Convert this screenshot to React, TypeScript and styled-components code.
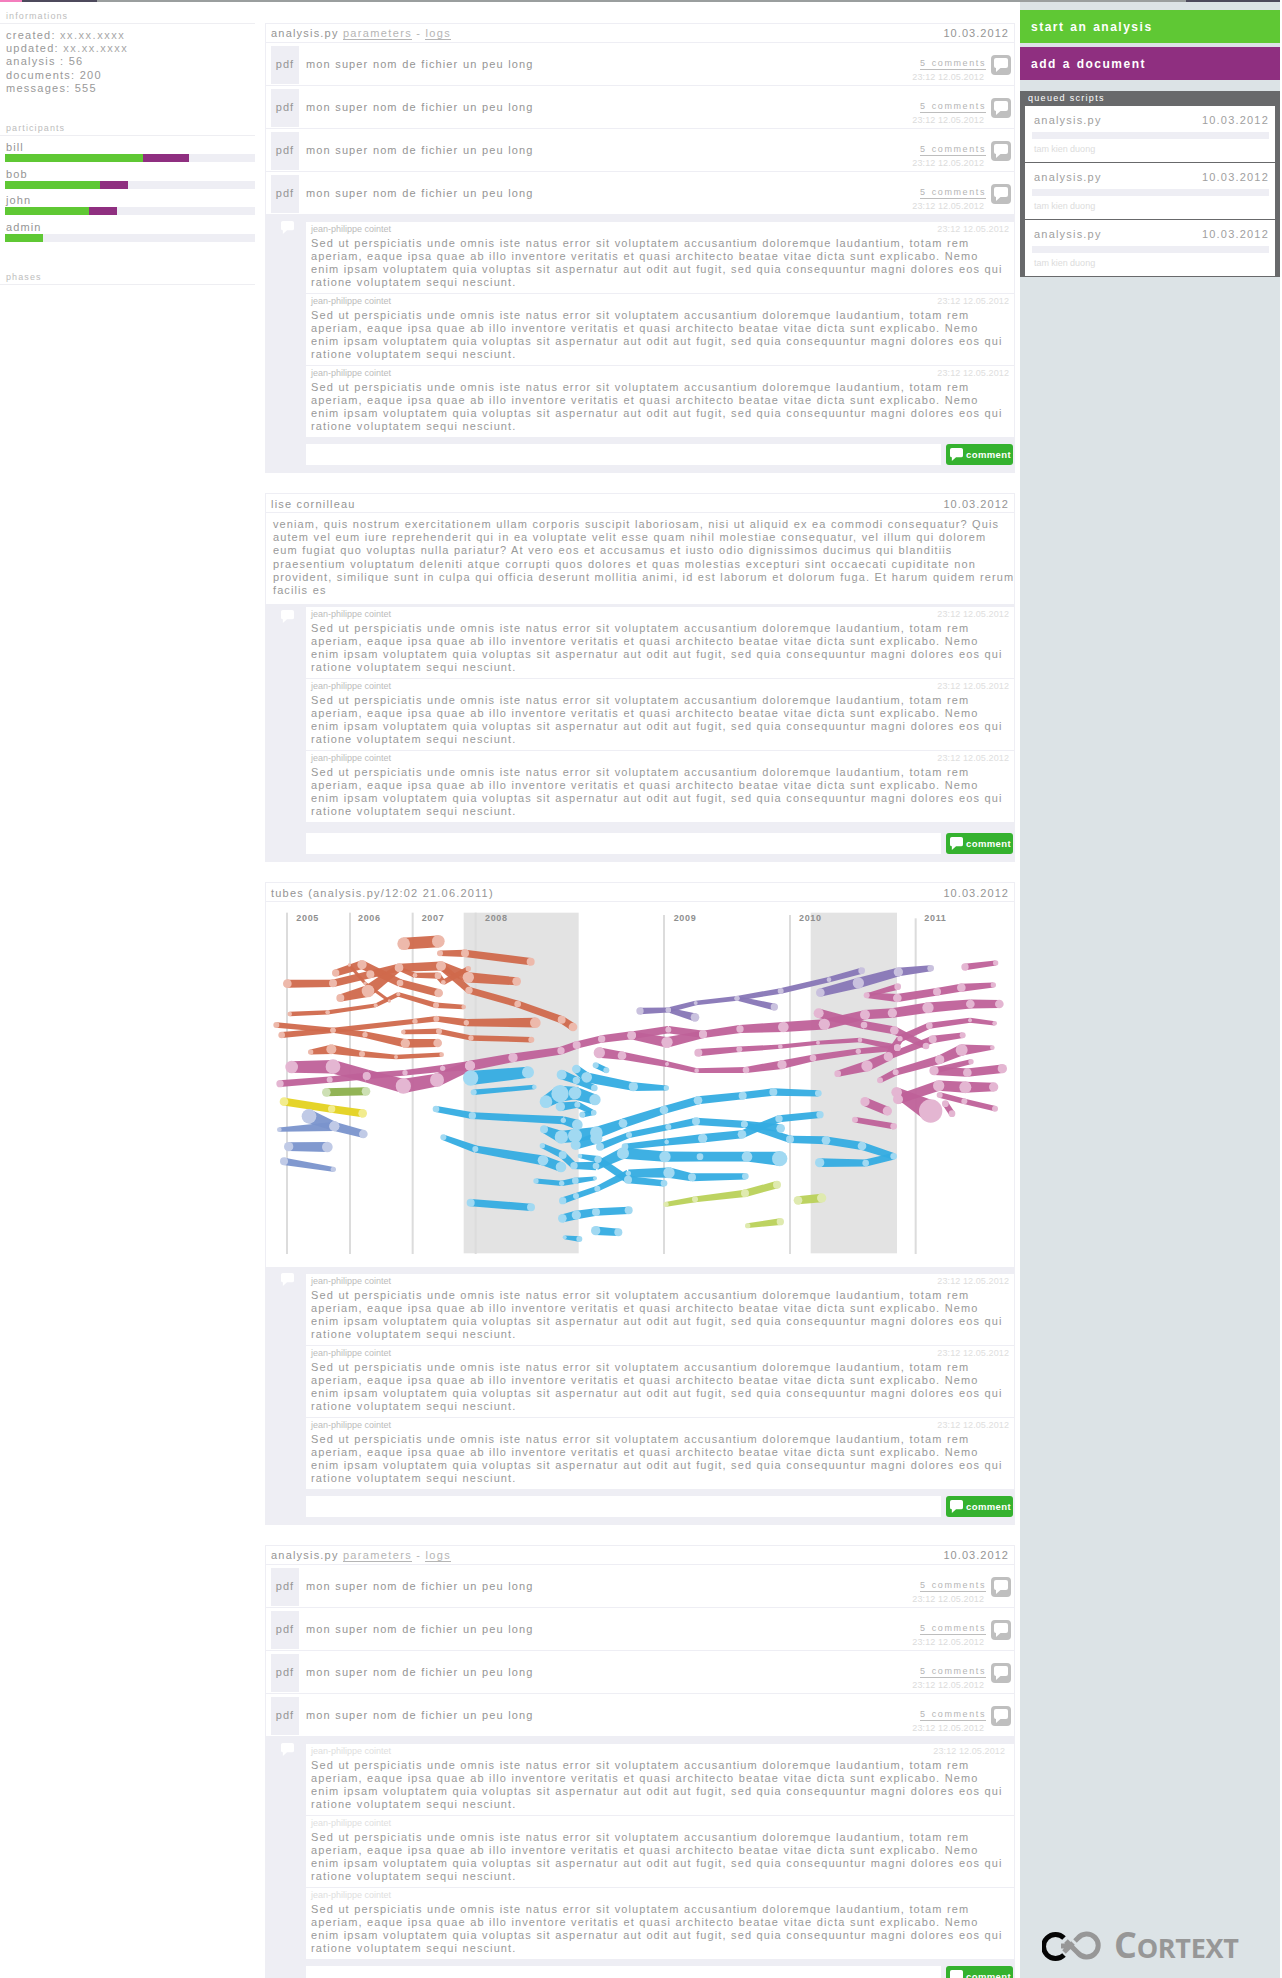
import React from "react";
import styled, { createGlobalStyle } from "styled-components";

const Global = createGlobalStyle`
  html, body { margin: 0; padding: 0; background: #fff; }
  body { font-family: "Liberation Sans", Arial, sans-serif; color: #959595; font-size: 11px; }
`;

const Page = styled.div`
  width: 1282px; height: 1978px; overflow: hidden; display: flex; flex-direction: column;
`;
const Strip = styled.div`display: flex; height: 2px; flex: none;`;
const StripPart = styled.div<{ $w: number; $c: string }>`
  width: ${p => p.$w}px; background: ${p => p.$c};
`;
const Columns = styled.div`display: flex; flex: 1; min-height: 0;`;

const Left = styled.aside`width: 255px; flex: none; margin-right: 10px;`;
const SideHead = styled.div<{ $top: number }>`
  margin-top: ${p => p.$top}px; padding: 0 0 0 6px; height: 13px; line-height: 13px; font-size: 9px; letter-spacing: 1.1px;
  color: #bdbdbd; border-bottom: 1px solid #eeeef2;
`;
const InfoList = styled.div`padding: 5px 0 0 6px; line-height: 13.2px; letter-spacing: 1.25px; color: #999;`;
const Xs = styled.span`color: #a8a8a8; letter-spacing: 1.5px;`;
const People = styled.div`padding: 5px 0 0 5px;`;
const Person = styled.div`height: 26.67px;`;
const PersonName = styled.div`height: 13px; line-height: 13px; padding-left: 1px; letter-spacing: 1.1px;`;
const Track = styled.div`display: flex; height: 8px; background: #eeeef4;`;
const Fill = styled.div<{ $c: string }>`background: ${p => p.$c};`;

const Main = styled.main`width: 750px; flex: none; padding-top: 21px; margin-right: 5px;`;
const Card = styled.section`margin-bottom: 20px; border-left: 1px solid #eeeef4; border-right: 1px solid #eeeef4;`;
const CardHead = styled.header<{ $raised?: boolean }>`
  display: flex; align-items: center; justify-content: space-between; box-sizing: content-box;
  padding: ${p => (p.$raised ? 0 : 1)}px 5px 0 5px; height: ${p => (p.$raised ? 18 : 17)}px;
  border-top: 1px solid #eeeef4; border-bottom: 1px solid #eeeef4;
  letter-spacing: 1.2px;
`;
const HeadDate = styled.span`letter-spacing: 1.05px;`;
const HeadLink = styled.span`color: #b5b5b5; border-bottom: 1px solid #b5b5b5; line-height: 12px; letter-spacing: 1.35px;`;
const Sep = styled.span`color: #b5b5b5;`;
const FileRow = styled.div`
  display: flex; padding: 3px 3px 0 5px; box-sizing: content-box; height: 39px;
  border-bottom: 1px solid #eeeef4; &:last-of-type { border-bottom: 0; height: 40px; }
`;
const PdfTag = styled.div`
  width: 28px; height: 38px; padding-bottom: 2px; box-sizing: border-box; background: #eeeef4; display: flex; align-items: center; justify-content: center;
  letter-spacing: 1px;
`;
const FileName = styled.div`flex: 1; padding: 0 0 0 7px; line-height: 36px; letter-spacing: 1.1px; word-spacing: .45px;`;
const FileMeta = styled.div`display: flex; flex-direction: column; align-items: flex-end; padding-top: 12px;`;
const CommentsLink = styled.span`
  font-size: 9px; letter-spacing: 1.6px; word-spacing: 1px; line-height: 11px; color: #b5b5b5; border-bottom: 1px solid #bdbdbd; margin-right: 1px;
`;
const SmallDate = styled.span`
  font-size: 9px; line-height: 12px; letter-spacing: .1px; color: #dcdcdc; margin: 1px 3px 0 0;
`;
const IconBox = styled.div`
  width: 20px; height: 20px; margin: 9px 0 0 4px; border-radius: 4px; background: #bfbfbf; display: flex;
  align-items: center; justify-content: center;
`;
const PostText = styled.div`
  padding: 5px 0 7px 7px; line-height: 13.2px; letter-spacing: 1.1px; word-spacing: .35px; color: #999;
`;
const PostLine = styled.div`white-space: nowrap;`;
const ChartBox = styled.div`height: 365px;`;
const Discussion = styled.div<{ $tight?: boolean }>`
  position: relative; background: #eeeef4; height: 258px; box-sizing: border-box; padding: ${p => (p.$tight ? 3 : 7)}px 0 8px 40px;
  display: flex; flex-direction: column;
`;
const DiscussionIcon = styled.div`position: absolute; left: 15px; top: 6px; line-height: 0;`;
const Comment = styled.article`
  flex: none; background: #fff; border-bottom: 1px solid #eeeef4; padding: 2px 5px 0 5px; box-sizing: content-box;
  height: 69px;
`;
const CommentHead = styled.div`display: flex; justify-content: space-between; height: 12px; line-height: 11px; font-size: 9px;`;
const Author = styled.span<{ $faint?: boolean }>`color: ${p => (p.$faint ? "#dedede" : "#bbbbbb")};`;
const CommentDate = styled.span<{ $faint?: boolean }>`
  letter-spacing: .1px; color: #dedede; margin-right: ${p => (p.$faint ? 4 : 0)}px;
`;
const CommentText = styled.p`
  margin: 1px 0 0; line-height: 13px; letter-spacing: 1.1px; word-spacing: .35px; color: #999;
`;
const CommentForm = styled.div`display: flex; gap: 5px; margin-top: auto; padding-right: 1px;`;
const CommentInput = styled.div`flex: 1; height: 21px; background: #fff;`;
const CommentButton = styled.div`
  width: 67px; height: 21px; border-radius: 3px; background: #35b22f; color: #fff; font-weight: bold; font-size: 9.5px;
  display: flex; align-items: center; justify-content: flex-start; gap: 3px; padding: 0 0 1px 4px; box-sizing: border-box;
  letter-spacing: .4px;
`;

const Right = styled.aside`
  width: 260px; flex: none; background: #dce3e6; display: flex; flex-direction: column; padding-top: 8px;
`;
const ActionButton = styled.div<{ $c: string; $lh: number }>`
  height: 33px; line-height: ${p => p.$lh}px; background: ${p => p.$c}; color: #fff; font-weight: bold; font-size: 12px;
  letter-spacing: 1.5px; word-spacing: 1px; padding-left: 11px; margin-bottom: 4px; overflow: hidden;
`;
const Queue = styled.div`margin-top: 7px; background: #68696b; padding: 0 5px 1px;`;
const QueueHead = styled.div`height: 15px; line-height: 14px; font-size: 9px; letter-spacing: 1.3px; color: #fff; padding-left: 3px;`;
const QueueItem = styled.div`
  height: 56px; background: #fff; margin-bottom: 1px; padding: 0 6px 0 7px; &:last-child { margin-bottom: 0; }
`;
const QueueTop = styled.div`
  display: flex; justify-content: space-between; height: 26px; line-height: 29px; letter-spacing: 1.2px; padding: 0 0 0 2px; color: #a0a0a0;
`;
const QueueBar = styled.div`height: 7px; background: #eeeef4;`;
const QueueAuthor = styled.div`font-size: 9px; line-height: 20px; padding-left: 2px; color: #dcdcdc; word-spacing: -.2px;`;
const LogoBox = styled.div`
  margin-top: auto; margin-bottom: 16px; margin-left: 22px; display: flex; align-items: center; gap: 12px; height: 32px;
`;
const LogoWord = styled.span`
  font-family: "Open Sans", sans-serif; font-weight: 700; font-size: 36px; line-height: 32px; color: #979797; letter-spacing: -.3px;
`;
const LogoSmall = styled.span`font-size: 27px;`;

const Bubble = ({ w = 12, c = "#fff" }: { w?: number; c?: string }) => (
  <svg width={w} height={w} viewBox="0 0 14 14">
    <path fill={c} d="M2 0h10a2 2 0 0 1 2 2v6a2 2 0 0 1-2 2H6.5L2 14v-4a2 2 0 0 1-2-2V2a2 2 0 0 1 2-2z" />
  </svg>
);

type Pt = [number, number, number];
type Tube = { k: string; p: Pt[] };
const PAL: Record<string, [string, string]> = {
  o: ["#d0694c", "#edb9ab"], m: ["#bf6199", "#e4b6d2"], b: ["#34ace1", "#a1d9f2"], v: ["#8776b6", "#c9c1de"],
  y: ["#e4d21f", "#f2ec8e"], g: ["#8cb04d", "#cde0b4"], l: ["#b9d158", "#dfeaaf"], s: ["#7a93cc", "#c0cae6"],
};
const B = 1125;
const sh = (p: Pt[]): Pt[] => p.map(([x, y, d]) => [x + B, y, d]);
const TUBES: Tube[] = [
  { k: "o", p: [[416, 191, 38], [520, 184, 38]] },
  { k: "o", p: [[525, 220, 18], [600, 220, 24], [797, 245, 24]] },
  { k: "o", p: [[67, 311, 26], [204, 310, 24], [316, 283, 24], [402, 263, 26], [528, 258, 30], [610, 292, 34], [755, 304, 26]] },
  { k: "o", p: [[212, 279, 22], [291, 254, 28], [405, 309, 20], [521, 339, 26]] },
  { k: "o", p: [[226, 354, 24], [309, 333, 38], [402, 263, 24]] },
  { k: "o", p: [[528, 258, 24], [612, 331, 22], [758, 372, 20], [890, 419, 24], [924, 441, 26]] },
  { k: "o", p: [[253, 255, 10], [300, 310, 10], [373, 363, 10]] },
  { k: "o", p: [[74, 402, 14], [188, 397, 14], [332, 376, 12], [400, 343, 12], [513, 376, 18], [596, 381, 14]] },
  { k: "o", p: [[34, 435, 18], [204, 451, 16], [300, 464, 16], [421, 490, 28], [518, 489, 26]] },
  { k: "o", p: [[50, 465, 20], [204, 451, 16], [450, 424, 16], [514, 416, 18], [604, 428, 16], [811, 428, 32]] },
  { k: "o", p: [[415, 456, 14], [522, 454, 18], [618, 474, 16], [799, 479, 18]] },
  { k: "o", p: [[137, 516, 16], [199, 508, 30], [291, 522, 18], [393, 531, 12], [530, 524, 14]] },
  { k: "o", p: [[400, 265, 14], [450, 286, 14], [519, 287, 20], [535, 307, 14], [610, 266, 16]] },
  { k: "m", p: [[80, 561, 38], [204, 560, 44], [305, 588, 24], [415, 618, 46], [516, 600, 42], [615, 557, 30], [744, 533, 28], [888, 512, 22], [935, 495, 24], [1010, 477, 22], [1100, 466, 26], [B + 85, 449, 18], [B + 189, 463, 24], [B + 300, 447, 22], [B + 430, 441, 32], [B + 553, 433, 34], [B + 675, 404, 30], [B + 757, 399, 28], [B + 864, 383, 34], [B + 991, 372, 26], [B + 1078, 372, 26]] },
  { k: "m", p: [[1100, 466, 26], [B + 81, 487, 34], [B + 189, 463, 24]] },
  { k: "m", p: [[45, 611, 22], [194, 599, 18], [305, 588, 22], [420, 578, 16], [533, 565, 16], [615, 557, 30]] },
  { k: "m", p: [[1003, 518, 34], [1071, 527, 26], [B + 81, 552, 12], [B + 170, 572, 14], [B + 318, 570, 20], [B + 426, 554, 28], [B + 519, 534, 20], [B + 655, 514, 16], [B + 772, 503, 20]] },
  { k: "m", p: sh([[175, 518, 24], [298, 508, 18], [421, 500, 14], [534, 488, 12], [660, 480, 14], [772, 503, 20]]) },
  { k: "m", p: sh([[536, 400, 30], [672, 435, 20], [763, 451, 26], [858, 498, 20]]) },
  { k: "m", p: sh([[593, 581, 20], [681, 558, 34], [745, 530, 28], [780, 476, 16], [868, 437, 20], [990, 421, 12], [1064, 430, 14]]) },
  { k: "m", p: sh([[720, 601, 18], [767, 577, 18], [899, 539, 28], [965, 510, 36], [1057, 503, 14]]) },
  { k: "m", p: sh([[745, 530, 20], [878, 478, 24], [968, 466, 18]]) },
  { k: "m", p: sh([[882, 572, 28], [982, 578, 26], [1087, 566, 28]]) },
  { k: "m", p: sh([[882, 572, 20], [993, 545, 16]]) },
  { k: "m", p: sh([[680, 346, 18], [772, 354, 26], [891, 335, 24], [964, 323, 26], [1060, 315, 16]]) },
  { k: "m", p: sh([[680, 346, 12], [773, 320, 20]]) },
  { k: "m", p: sh([[975, 261, 22], [1067, 249, 16]]) },
  { k: "m", p: sh([[770, 637, 32], [872, 693, 70]]) },
  { k: "m", p: sh([[774, 658, 30], [896, 617, 34], [976, 622, 36], [1061, 621, 28]]) },
  { k: "m", p: sh([[899, 645, 18], [973, 664, 18], [1065, 686, 18]]) },
  { k: "m", p: sh([[675, 665, 28], [742, 693, 28]]) },
  { k: "m", p: sh([[645, 719, 18], [761, 739, 20]]) },
  { k: "m", p: sh([[916, 671, 20], [936, 701, 20]]) },
  { k: "v", p: [[1125, 393, 22], [B + 85, 390, 16], [B + 167, 369, 12], [B + 291, 355, 16], [B + 422, 333, 18], [B + 567, 299, 14], [B + 665, 272, 20]] },
  { k: "v", p: sh([[85, 390, 16], [165, 412, 26]]) },
  { k: "v", p: sh([[291, 355, 14], [403, 381, 22]]) },
  { k: "v", p: sh([[541, 338, 26], [655, 309, 34], [775, 276, 28], [872, 265, 20]]) },
  { k: "b", p: [[617, 594, 46], [789, 577, 36]] },
  { k: "b", p: [[626, 637, 18], [808, 621, 14]] },
  { k: "b", p: [[513, 687, 20], [622, 707, 22], [895, 721, 16], [937, 734, 32]] },
  { k: "b", p: [[535, 772, 18], [631, 807, 18], [834, 841, 32], [888, 861, 32]] },
  { k: "b", p: [[617, 968, 24], [798, 982, 24]] },
  { k: "b", p: [[813, 903, 16], [890, 910, 16], [931, 902, 20], [990, 895, 12]] },
  { k: "b", p: [[893, 962, 22], [933, 948, 18], [997, 926, 18], [1090, 880, 16], [B + 87, 878, 34], [B + 156, 892, 24], [B + 316, 889, 20]] },
  { k: "b", p: [[892, 1015, 26], [934, 1005, 28], [993, 996, 24], [1091, 991, 24]] },
  { k: "b", p: [[992, 1052, 28], [1060, 1057, 24]] },
  { k: "b", p: [[899, 1072, 12], [943, 1077, 18]] },
  { k: "b", p: [[890, 584, 30], [934, 601, 22], [988, 624, 20]] },
  { k: "b", p: [[934, 567, 26], [965, 592, 32], [1105, 620, 28], [B + 79, 624, 16]] },
  { k: "b", p: [[992, 556, 18], [1024, 571, 18]] },
  { k: "b", p: [[843, 665, 38], [885, 641, 52], [930, 639, 38], [990, 659, 34]] },
  { k: "b", p: [[886, 680, 28], [937, 674, 18], [986, 698, 16]] },
  { k: "b", p: [[952, 704, 18], [986, 698, 16]] },
  { k: "b", p: [[837, 748, 24], [889, 771, 40], [930, 767, 42], [994, 758, 38], [1074, 730, 26], [B + 72, 690, 26], [B + 174, 661, 26], [B + 308, 647, 24], [B + 400, 636, 24], [B + 535, 640, 20]] },
  { k: "b", p: [[932, 795, 30], [994, 775, 36]] },
  { k: "b", p: [[1005, 800, 24], [1092, 765, 18], [B + 85, 741, 18], [B + 168, 724, 24], [B + 313, 733, 20], [B + 422, 745, 26]] },
  { k: "b", p: [[832, 797, 16], [893, 825, 24], [927, 857, 22], [993, 858, 20], [1074, 820, 36], [B + 75, 830, 34], [B + 180, 830, 20], [B + 321, 830, 32], [B + 419, 836, 46]] },
  { k: "b", p: [[945, 828, 14], [999, 838, 22], [1089, 899, 24], [B + 72, 910, 20]] },
  { k: "b", p: [[1080, 800, 20], [B + 80, 786, 14], [B + 188, 775, 28], [B + 306, 763, 26], [B + 417, 716, 22], [B + 540, 704, 22]] },
  { k: "b", p: sh([[313, 733, 20], [450, 778, 24], [558, 781, 26], [666, 798, 26], [761, 829, 20], [677, 849, 20], [539, 848, 28]]) },
  { k: "l", p: sh([[78, 973, 16], [165, 958, 18], [315, 940, 24], [411, 914, 24]]) },
  { k: "l", p: sh([[474, 961, 26], [545, 954, 28]]) },
  { k: "l", p: sh([[323, 1037, 16], [421, 1025, 22]]) },
  { k: "g", p: [[184, 637, 26], [303, 634, 26]] },
  { k: "y", p: [[57, 665, 26], [200, 687, 22], [293, 700, 26]] },
  { k: "s", p: [[43, 749, 14], [208, 739, 30], [295, 762, 26]] },
  { k: "s", p: [[132, 709, 44], [208, 739, 30]] },
  { k: "s", p: [[71, 800, 28], [187, 801, 32]] },
  { k: "s", p: [[57, 844, 24], [205, 868, 16]] },
];
/* a node in the middle of a thick tube is often smaller than the tube itself */
const tubeWidth = (p: Pt[], i: number) => {
  const d = p[i][2];
  if (i === 0 || i === p.length - 1) return d * .92;
  return Math.max(d * .92, ((p[i - 1][2] + p[i + 1][2]) / 2) * .88);
};
const segPoints = (a: Pt, b: Pt, wa: number, wb: number) => {
  const dx = b[0] - a[0], dy = b[1] - a[1], l = Math.hypot(dx, dy) || 1;
  const nx = -dy / l, ny = dx / l, ra = wa / 2, rb = wb / 2;
  return [[a[0] + nx * ra, a[1] + ny * ra], [b[0] + nx * rb, b[1] + ny * rb], [b[0] - nx * rb, b[1] - ny * rb], [a[0] - nx * ra, a[1] - ny * ra]]
    .map(q => q.map(v => v.toFixed(1)).join(",")).join(" ");
};
const YEARS: [number, number, string][] = [[94, 122, "2005"], [279, 122, "2006"], [470, 122, "2007"], [660, 122, "2008"], [B + 101, 122, "2009"], [B + 477, 122, "2010"], [B + 853, 122, "2011"]];
const GRID: [number, number][] = [[66, 98], [255, 98], [443, 98], [632, 98], [B + 72, 105], [B + 450, 105], [B + 827, 115]];

const TubesChart = () => (
  <svg width="748" height="365" viewBox="3 66 2244 1095">
    <rect x="596" y="98" width="345" height="1022" fill="#e3e3e3" />
    <rect x={B + 512} y="98" width="259" height="1022" fill="#e3e3e3" />
    {GRID.map(([x, y]) => <rect key={x} x={x - 3} y={y} width="6" height={1122 - y} fill="#dcdcdc" />)}
    {YEARS.map(([x, y, t]) => (
      <text key={t} x={x} y={y} fontFamily="Liberation Sans, sans-serif" fontWeight="bold" fontSize="27" letterSpacing="2" fill="#8f8f8f">{t}</text>
    ))}
    {TUBES.map((t, i) => (
      <g key={i}>
        {t.p.slice(1).map((b, j) => (
          <polygon key={j} points={segPoints(t.p[j], b, tubeWidth(t.p, j), tubeWidth(t.p, j + 1))} fill={PAL[t.k][0]} opacity=".95" />
        ))}
      </g>
    ))}
    {TUBES.map((t, i) => (
      <g key={i}>
        {t.p.map(([x, y, d], j) => <circle key={j} cx={x} cy={y} r={d / 2} fill={PAL[t.k][1]} />)}
      </g>
    ))}
  </svg>
);

const LOREM = "Sed ut perspiciatis unde omnis iste natus error sit voluptatem accusantium doloremque laudantium, totam rem aperiam, eaque ipsa quae ab illo inventore veritatis et quasi architecto beatae vitae dicta sunt explicabo. Nemo enim ipsam voluptatem quia voluptas sit aspernatur aut odit aut fugit, sed quia consequuntur magni dolores eos qui ratione voluptatem sequi nesciunt.";
const POST = [
  "veniam, quis nostrum exercitationem ullam corporis suscipit laboriosam, nisi ut aliquid ex ea commodi consequatur? Quis",
  "autem vel eum iure reprehenderit qui in ea voluptate velit esse quam nihil molestiae consequatur, vel illum qui dolorem",
  "eum fugiat quo voluptas nulla pariatur? At vero eos et accusamus et iusto odio dignissimos ducimus qui blanditiis",
  "praesentium voluptatum deleniti atque corrupti quos dolores et quas molestias excepturi sint occaecati cupiditate non",
  "provident, similique sunt in culpa qui officia deserunt mollitia animi, id est laborum et dolorum fuga. Et harum quidem rerum",
  "facilis es",
];

const Comments = ({ tight, faint }: { tight?: boolean; faint?: boolean }) => (
  <Discussion $tight={tight}>
    <DiscussionIcon><Bubble w={13} /></DiscussionIcon>
    {[0, 1, 2].map(i => (
      <Comment key={i}>
        <CommentHead>
          <Author $faint={faint}>jean-philippe cointet</Author>
          {(!faint || i === 0) && <CommentDate $faint={faint}>23:12 12.05.2012</CommentDate>}
        </CommentHead>
        <CommentText>{LOREM}</CommentText>
      </Comment>
    ))}
    <CommentForm>
      <CommentInput />
      <CommentButton><Bubble w={13} />comment</CommentButton>
    </CommentForm>
  </Discussion>
);

const Files = () => (
  <>
    {[0, 1, 2, 3].map(i => (
      <FileRow key={i}>
        <PdfTag>pdf</PdfTag>
        <FileName>mon super nom de fichier un peu long</FileName>
        <FileMeta>
          <CommentsLink>5 comments</CommentsLink>
          <SmallDate>23:12 12.05.2012</SmallDate>
        </FileMeta>
        <IconBox><Bubble w={14} /></IconBox>
      </FileRow>
    ))}
  </>
);

const ScriptHead = () => (
  <CardHead $raised>
    <span>analysis.py <HeadLink>parameters</HeadLink> <Sep>-</Sep> <HeadLink>logs</HeadLink></span>
    <HeadDate>10.03.2012</HeadDate>
  </CardHead>
);

const PEOPLE = [
  { n: "bill", g: 138, p: 46 },
  { n: "bob", g: 95, p: 28 },
  { n: "john", g: 84, p: 28 },
  { n: "admin", g: 38, p: 0 },
];

export default function App() {
  return (
    <Page>
      <Global />
      <Strip>
        <StripPart $w={22} $c="#f47ebd" />
        <StripPart $w={75} $c="#4d4a5c" />
        <StripPart $w={1089} $c="#9a9e9e" />
        <StripPart $w={94} $c="#4d4a5c" />
      </Strip>
      <Columns>
        <Left>
          <SideHead $top={8}>informations</SideHead>
          <InfoList>
            <div>created: <Xs>xx.xx.xxxx</Xs></div>
            <div>updated: <Xs>xx.xx.xxxx</Xs></div>
            <div>analysis : 56</div>
            <div>documents: 200</div>
            <div>messages: 555</div>
          </InfoList>
          <SideHead $top={27}>participants</SideHead>
          <People>
            {PEOPLE.map(u => (
              <Person key={u.n}>
                <PersonName>{u.n}</PersonName>
                <Track>
                  <Fill $c="#5fc834" style={{ width: u.g }} />
                  <Fill $c="#8f2f80" style={{ width: u.p }} />
                </Track>
              </Person>
            ))}
          </People>
          <SideHead $top={23}>phases</SideHead>
        </Left>
        <Main>
          <Card>
            <ScriptHead />
            <Files />
            <Comments />
          </Card>
          <Card>
            <CardHead><span>lise cornilleau</span><HeadDate>10.03.2012</HeadDate></CardHead>
            <PostText>{POST.map(l => <PostLine key={l}>{l}</PostLine>)}</PostText>
            <Comments tight />
          </Card>
          <Card>
            <CardHead><span>tubes (analysis.py/12:02 21.06.2011)</span><HeadDate>10.03.2012</HeadDate></CardHead>
            <ChartBox><TubesChart /></ChartBox>
            <Comments />
          </Card>
          <Card>
            <ScriptHead />
            <Files />
            <Comments faint />
          </Card>
        </Main>
        <Right>
          <ActionButton $c="#5fc834" $lh={34}>start an analysis</ActionButton>
          <ActionButton $c="#8f2f80" $lh={35}>add a document</ActionButton>
          <Queue>
            <QueueHead>queued scripts</QueueHead>
            {[0, 1, 2].map(i => (
              <QueueItem key={i}>
                <QueueTop><span>analysis.py</span><span>10.03.2012</span></QueueTop>
                <QueueBar />
                <QueueAuthor>tam kien duong</QueueAuthor>
              </QueueItem>
            ))}
          </Queue>
          <LogoBox>
            <svg width="60" height="30" viewBox="0 0 60 30" fill="none" strokeWidth="5">
              <path stroke="#979797" d="M22 21 L31 12 M27 15 H19 M24 10 L36 22 A 11.5 11.5 0 1 0 36 7 L33 10" />
              <path stroke="#050505" d="M22 7 A 12 12 0 1 0 22 24" />
            </svg>
            <LogoWord>C<LogoSmall>ORTEXT</LogoSmall></LogoWord>
          </LogoBox>
        </Right>
      </Columns>
    </Page>
  );
}
